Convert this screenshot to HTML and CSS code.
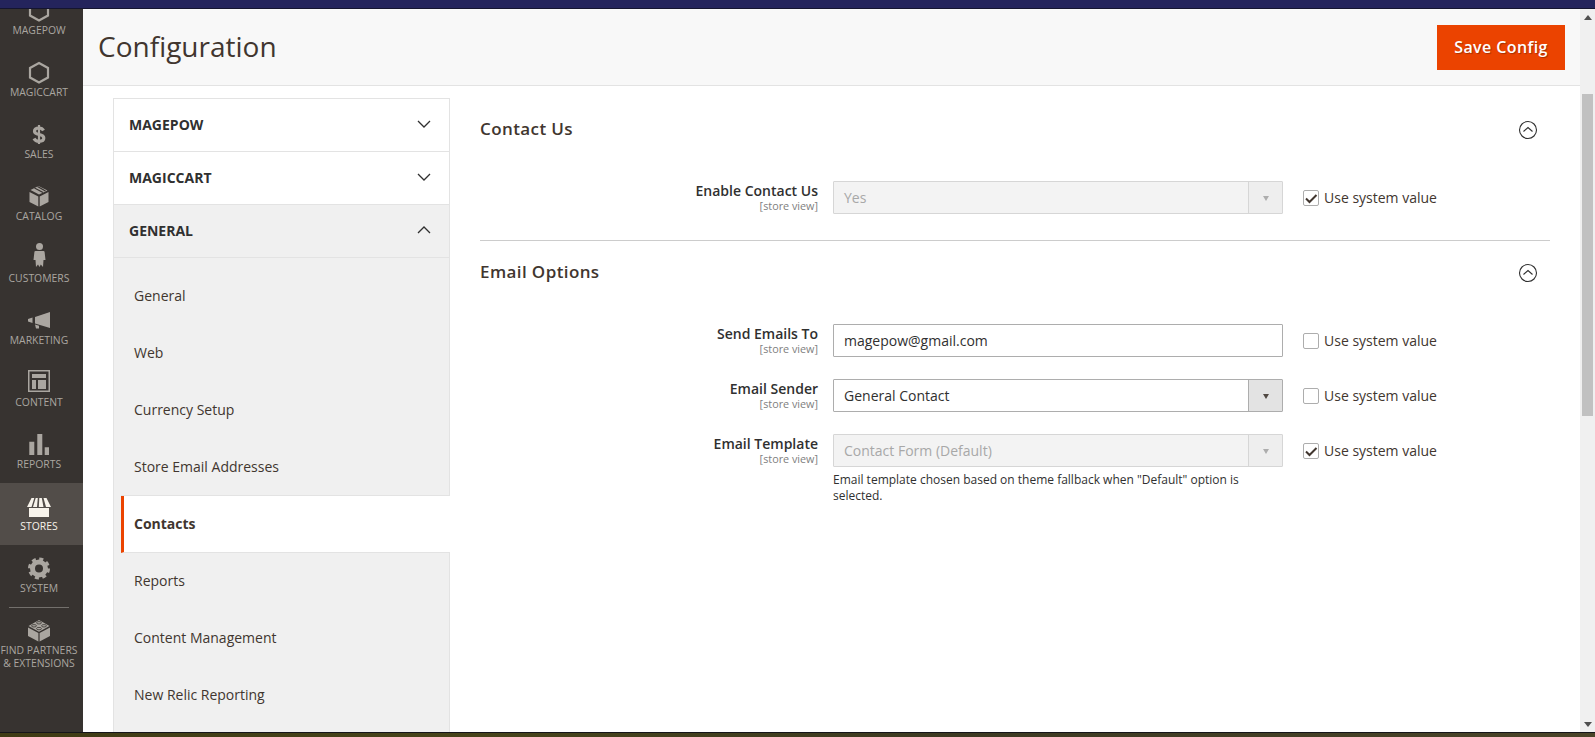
FILE: index.html
```html
<!DOCTYPE html>
<html lang="en">
<head>
    <meta charset="UTF-8">
    <title>Configuration</title>
    <link rel="stylesheet" href="styles.css">
</head>
<body>
    <div class="top-strip"></div>
    <div class="window">
        <nav class="sidebar">
            <ul class="menu">
                <li class="menu-item">
                    <svg class="menu-icon" viewBox="0 0 24 24"><path class="hex" d="M12 2 21 7v9.500L12 21.500 3 16.500V7Z"/></svg>
                    <span>Magepow</span>
                </li>
                <li class="menu-item">
                    <svg class="menu-icon" viewBox="0 0 24 24"><path class="hex" d="M12 2 21 7v9.500L12 21.500 3 16.500V7Z"/></svg>
                    <span>Magiccart</span>
                </li>
                <li class="menu-item">
                    <svg class="menu-icon" viewBox="0 0 24 24">
                        <path class="dollar-s" d="M16.500 7.500C15.500 5.500 14 5 12 5 9.500 5 7.500 6.200 7.500 8.300 7.500 13 16.800 10 16.800 15 16.800 17 14.800 18.300 12 18.300 9.800 18.300 8 17.500 7 15.500"/>
                        <path class="dollar-bar" d="M12 2V21"/>
                    </svg>
                    <span>Sales</span>
                </li>
                <li class="menu-item">
                    <svg class="menu-icon" viewBox="0 0 24 24">
                        <path d="M2.500 7 11.300 11.500V21.500L2.500 17ZM21.500 7 12.700 11.500V21.500L21.500 17ZM11.500 1 3.500 5 12 9.500 20.500 5.500Z"/>
                        <path class="cut" d="M7.500 3 16 7.500M10.500 1.500 18.500 6"/>
                    </svg>
                    <span>Catalog</span>
                </li>
                <li class="menu-item">
                    <svg class="menu-icon" viewBox="0 0 24 24">
                        <circle cx="12.500" cy="-0.500" r="3.500"/>
                        <path d="M8.500 4H16.500Q17.500 4 17.600 5L18.500 13H16.500L16 20 13.800 17.500 12.500 20 11 17.500 9 20 8.500 13H6.500L7.400 5Q7.500 4 8.500 4Z"/>
                    </svg>
                    <span>Customers</span>
                </li>
                <li class="menu-item">
                    <svg class="menu-icon" viewBox="0 0 24 24"><path d="M23 3V19L8 14.500V8ZM1 10 5.500 8.500V14L1 12.500ZM8 15.500 12 16.700V19.500H9Z"/></svg>
                    <span>Marketing</span>
                </li>
                <li class="menu-item">
                    <svg class="menu-icon" viewBox="0 0 24 24"><path fill-rule="evenodd" d="M1-1H23V21H1ZM2.500.5V19.500H21.500V.5ZM5 3H19V7H5ZM5 9H9V18H5ZM11 9H19V18H11Z"/></svg>
                    <span>Content</span>
                </li>
                <li class="menu-item">
                    <svg class="menu-icon" viewBox="0 0 24 24"><path d="M2.300 8.700H7.300V22H2.300ZM10.300 1H15.300V22H10.300ZM17.700 14.300H22V22H17.700Z"/></svg>
                    <span>Reports</span>
                </li>
                <li class="menu-item active">
                    <svg class="menu-icon" viewBox="0 0 24 24"><path d="M4.500 3H7.300L4.500 12H0ZM8.700 3H10.800L10 12H6ZM12.300 3H14.800L16.500 12H11.800ZM16.500 3H19.500L24 12H19ZM2 13H22V22H2Z"/></svg>
                    <span>Stores</span>
                </li>
                <li class="menu-item">
                    <svg class="menu-icon" viewBox="0 0 24 24">
                        <circle class="gear-ring" cx="12" cy="11.500" r="6.500"/>
                        <circle class="gear-teeth" cx="12" cy="11.500" r="9.500"/>
                    </svg>
                    <span>System</span>
                </li>
                <li class="menu-item partners">
                    <svg class="menu-icon" viewBox="0 0 24 24">
                        <path d="M1 8.500 11.400 14V22.500L1 17ZM23 8.500 12.600 14V22.500L23 17ZM12 1 1.500 7 12 12.800 22.500 7Z"/>
                        <ellipse class="cut thin" cx="12" cy="3.800" rx="2.500" ry="1.200"/>
                        <ellipse class="cut thin" cx="7" cy="6.800" rx="2.500" ry="1.200"/>
                        <ellipse class="cut thin" cx="17" cy="6.800" rx="2.500" ry="1.200"/>
                        <ellipse class="cut thin" cx="12" cy="9.600" rx="2.500" ry="1.200"/>
                    </svg>
                    <span>Find Partners<br>&amp; Extensions</span>
                </li>
            </ul>
        </nav>

        <div class="page">
            <header class="page-header">
                <h1>Configuration</h1>
                <button class="save-button">Save Config</button>
            </header>

            <div class="page-body">
                <aside class="tabs">
                    <div class="tab-head">MAGEPOW
                        <svg class="chevron" viewBox="0 0 14 8"><path d="M1 1l6 6 6-6"/></svg>
                    </div>
                    <div class="tab-head">MAGICCART
                        <svg class="chevron" viewBox="0 0 14 8"><path d="M1 1l6 6 6-6"/></svg>
                    </div>
                    <div class="tab-head open">GENERAL
                        <svg class="chevron" viewBox="0 0 14 8"><path d="M1 7l6-6 6 6"/></svg>
                    </div>
                    <ul class="tab-items">
                        <li>General</li>
                        <li>Web</li>
                        <li>Currency Setup</li>
                        <li>Store Email Addresses</li>
                        <li class="current">Contacts</li>
                        <li>Reports</li>
                        <li>Content Management</li>
                        <li>New Relic Reporting</li>
                    </ul>
                </aside>

                <main class="settings">
                    <section class="section first">
                        <div class="section-head">
                            <h2>Contact Us</h2>
                            <svg class="collapse" viewBox="0 0 20 20"><circle cx="10" cy="10" r="8.500"/><path d="M5.500 11.500 10 7.500l4.500 4"/></svg>
                        </div>
                        <div class="field">
                            <div class="field-label"><label>Enable Contact Us</label><small>[store view]</small></div>
                            <div class="select disabled"><span>Yes</span><i class="select-arrow"></i></div>
                            <div class="use-system"><span class="checkbox">
                                <svg viewBox="0 0 14 14"><path d="M2 7.500 5.500 11 12.500 4"/></svg></span>Use system value</div>
                        </div>
                    </section>

                    <section class="section">
                        <div class="section-head">
                            <h2>Email Options</h2>
                            <svg class="collapse" viewBox="0 0 20 20"><circle cx="10" cy="10" r="8.500"/><path d="M5.500 11.500 10 7.500l4.500 4"/></svg>
                        </div>
                        <div class="field">
                            <div class="field-label"><label>Send Emails To</label><small>[store view]</small></div>
                            <div class="text-input">magepow@gmail.com</div>
                            <div class="use-system"><span class="checkbox"></span>Use system value</div>
                        </div>
                        <div class="field">
                            <div class="field-label"><label>Email Sender</label><small>[store view]</small></div>
                            <div class="select"><span>General Contact</span><i class="select-arrow"></i></div>
                            <div class="use-system"><span class="checkbox"></span>Use system value</div>
                        </div>
                        <div class="field">
                            <div class="field-label"><label>Email Template</label><small>[store view]</small></div>
                            <div class="control-wrap">
                                <div class="select disabled"><span>Contact Form (Default)</span><i class="select-arrow"></i></div>
                                <p class="note">Email template chosen based on theme fallback when "Default" option is selected.</p>
                            </div>
                            <div class="use-system"><span class="checkbox">
                                <svg viewBox="0 0 14 14"><path d="M2 7.500 5.500 11 12.500 4"/></svg></span>Use system value</div>
                        </div>
                    </section>
                </main>
            </div>
        </div>

        <div class="scrollbar">
            <i class="arrow-up"></i>
            <div class="thumb"></div>
            <i class="arrow-down"></i>
        </div>
    </div>
    <div class="bottom-strip"></div>
</body>
</html>
```

FILE: styles.css
```css
* {
    box-sizing: border-box;
}
html, body {
    height: 100%;
}
body {
    font-family: "Open Sans", sans-serif;
    font-size: 14px;
    color: #303030;
    background-color: #fff;
    margin: 0;
    overflow: hidden;
    display: flex;
    flex-direction: column;
}
ul {
    list-style: none;
    margin: 0;
    padding: 0;
}

.top-strip {
    height: 9px;
    flex: none;
    background-color: #24245c;
    border-bottom: 1px solid #15152f;
}
.bottom-strip {
    height: 5px;
    flex: none;
    background: linear-gradient(90deg, #3f3b14, #47441a 30%, #3d3a22 60%, #4a4428);
    border-top: 1px solid #15151a;
}
.window {
    flex: 1;
    min-height: 0;
    display: flex;
}

/* left admin menu */
.sidebar {
    width: 83px;
    flex: none;
    background-color: #373330;
    overflow: hidden;
}
.menu {
    margin-top: -22px;
}
.menu-item {
    height: 62px;
    padding: 12px 5px 0 0;
    display: flex;
    flex-direction: column;
    align-items: center;
    color: #aaa6a0;
    font-size: 10.4px;
    line-height: 13px;
    text-transform: uppercase;
    text-align: center;
    white-space: nowrap;
}
.menu-item.active {
    background-color: #524d49;
    color: #f7f3eb;
}
.menu-icon {
    width: 24px;
    height: 24px;
    flex: none;
    margin-bottom: 1px;
    fill: #aaa6a0;
    overflow: visible;
}
.active .menu-icon {
    fill: #f7f3eb;
}
.hex {
    fill: none;
    stroke: #aaa6a0;
    stroke-width: 2.200;
}
.cut {
    fill: none;
    stroke: #373330;
    stroke-width: 1.200;
}
.cut.thin {
    stroke-width: 0.800;
}
.gear-ring {
    fill: none;
    stroke: #aaa6a0;
    stroke-width: 5;
}
.gear-teeth {
    fill: none;
    stroke: #aaa6a0;
    stroke-width: 3;
    stroke-dasharray: 4 3.460;
}
.dollar-s {
    fill: none;
    stroke: #aaa6a0;
    stroke-width: 3.200;
}
.dollar-bar {
    fill: none;
    stroke: #aaa6a0;
    stroke-width: 2.200;
}
.partners {
    height: auto;
    padding-top: 0;
}
.partners::before {
    content: "";
    width: 60px;
    height: 1px;
    flex: none;
    background-color: #73706c;
    margin-bottom: 11px;
}

/* page header */
.page {
    flex: 1;
    min-width: 0;
    display: flex;
    flex-direction: column;
}
.page-header {
    height: 77px;
    flex: none;
    padding: 16px 15px 0 15px;
    display: flex;
    justify-content: space-between;
    align-items: flex-start;
    background-color: #f8f8f8;
    border-bottom: 1px solid #e3e3e3;
}
h1 {
    margin: 0;
    font-size: 28px;
    font-weight: 400;
    line-height: 42px;
    color: #41362f;
}
.save-button {
    width: 128px;
    height: 45px;
    padding: 0 0 2px;
    border: 0;
    background-color: #eb4300;
    color: #fff;
    font-family: inherit;
    font-size: 16px;
    font-weight: 600;
    letter-spacing: 0.4px;
    text-shadow: 1px 1px 1px rgba(0, 0, 0, 0.3);
}

.page-body {
    flex: 1;
    min-height: 0;
    overflow: hidden;
    padding: 12px 30px 0;
    display: flex;
    gap: 30px;
}

/* config tabs */
.tabs {
    width: 337px;
    flex: none;
    border: 1px solid #e3e3e3;
    border-bottom: 0;
    background-color: #f0f0f0;
    align-self: flex-start;
}
.tab-head {
    height: 53px;
    padding: 0 15px 2px;
    display: flex;
    justify-content: space-between;
    align-items: center;
    background-color: #fff;
    border-bottom: 1px solid #e3e3e3;
    font-weight: 700;
    font-size: 14px;
    color: #303030;
}
.tab-head.open {
    background-color: #f0f0f0;
}
.chevron {
    width: 14px;
    height: 8px;
    margin-right: 3px;
    fill: none;
    stroke: #303030;
    stroke-width: 1.300;
}
.tab-items {
    padding-top: 10px;
    padding-bottom: 40px;
}
.tab-items li {
    height: 57px;
    padding-left: 20px;
    line-height: 55px;
    color: #41362f;
}
.tab-items .current {
    margin: 0 -1px 0 7px;
    padding-left: 10px;
    background-color: #fff;
    border-left: 3px solid #eb4300;
    border-bottom: 1px solid #e3e3e3;
    font-weight: 700;
    box-shadow: 0 -1px 0 #e3e3e3;
}

/* settings column */
.settings {
    flex: 1;
    min-width: 0;
}
.section + .section {
    border-top: 1px solid #cccccc;
}
.section.first {
    height: 142px;
}
.section-head {
    height: 63px;
    padding-right: 12px;
    margin-bottom: 20px;
    display: flex;
    justify-content: space-between;
    align-items: center;
}
.section .field {
    margin-bottom: 22px;
}
h2 {
    margin: -2px 0 0;
    font-size: 17px;
    font-weight: 600;
    letter-spacing: 0.4px;
    color: #41362f;
}
.collapse {
    width: 20px;
    height: 20px;
    fill: none;
    stroke: #303030;
    stroke-width: 1.100;
}
.field {
    display: grid;
    grid-template-columns: 338px 450px 1fr;
    column-gap: 15px;
    align-items: start;
}
.field-label {
    text-align: right;
    padding-top: 1px;
}
.field-label label {
    display: block;
    font-weight: 600;
    line-height: 18px;
    color: #303030;
}
.field-label small {
    display: block;
    font-size: 10.800px;
    line-height: 12px;
    color: #808080;
}
.text-input, .select {
    height: 33px;
    border: 1px solid #adadad;
    border-radius: 1px;
    background-color: #fff;
    padding-left: 10px;
    line-height: 31px;
    color: #303030;
}
.select {
    display: flex;
    justify-content: space-between;
}
.select-arrow {
    width: 34px;
    flex: none;
    border-left: 1px solid #adadad;
    background-color: #e3e3e3;
    position: relative;
}
.select-arrow::after {
    content: "";
    position: absolute;
    left: 14px;
    top: 14px;
    border: 3.500px solid transparent;
    border-bottom: 0;
    border-top: 5px solid #514943;
}
.select.disabled {
    border-color: #d6d6d6;
    background-color: #f3f3f3;
    color: #a8a8a8;
}
.disabled .select-arrow {
    border-left-color: #d6d6d6;
    background-color: #eeeeee;
}
.disabled .select-arrow::after {
    border-top-color: #adadad;
}
.note {
    margin: 5px 0 0;
    font-size: 12px;
    line-height: 16px;
    color: #303030;
}
.use-system {
    height: 33px;
    margin-left: 5px;
    display: flex;
    align-items: center;
    color: #41362f;
}
.checkbox {
    width: 16px;
    height: 16px;
    margin-right: 5px;
    border: 1px solid #adadad;
    border-radius: 2px;
    background-color: #fff;
}
.checkbox svg {
    display: block;
    width: 14px;
    height: 14px;
    fill: none;
    stroke: #41362f;
    stroke-width: 2;
}

/* fake browser scrollbar */
.scrollbar {
    width: 15px;
    flex: none;
    position: relative;
    background-color: #f0f0f0;
}
.thumb {
    position: absolute;
    left: 2px;
    top: 85px;
    width: 11px;
    height: 322px;
    background-color: #c1c1c1;
}
.arrow-up, .arrow-down {
    position: absolute;
    left: 4px;
    border: 4px solid transparent;
}
.arrow-up {
    top: 6px;
    border-top: 0;
    border-bottom: 5px solid #505050;
}
.arrow-down {
    bottom: 5px;
    border-bottom: 0;
    border-top: 5px solid #505050;
}
```
